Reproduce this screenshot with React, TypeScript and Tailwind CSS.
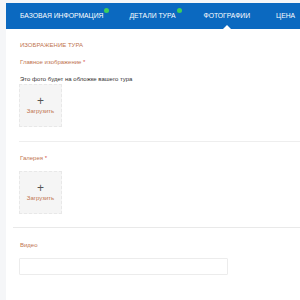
import React from 'react'

const Dot = () => (
    <span className="absolute -right-[6px] -top-[3px] w-[5px] h-[5px] rounded-full bg-[#3ecf5a]" />
)

const UploadBox = () => (
    <div className="ml-[6px] w-[43px] h-[43px] bg-[#f5f5f5] border border-dashed border-[#e8e8e8] flex flex-col items-center justify-center">
        <span className="text-[#555] text-[12px] leading-[11px] font-light">+</span>
        <span className="text-[#c0744f] text-[6px] leading-[9px]">Загрузить</span>
    </div>
)

const App = () => {
    return (
        <div className="w-[300px] h-[300px] flex bg-[#f5f6f8] overflow-hidden" style={{ fontFamily: '"Liberation Sans", Arial, sans-serif' }}>
            <div className="w-[6px] shrink-0" />
            <div className="flex-1 flex flex-col bg-white">
                <div className="h-[3px] bg-[#f5f6f8] shrink-0" />
                <div className="h-[26px] bg-[#0b69c0] flex items-center pl-[14px] text-white text-[6.8px] whitespace-nowrap shrink-0">
                    <span className="relative">БАЗОВАЯ ИНФОРМАЦИЯ<Dot /></span>
                    <span className="relative ml-[26px]">ДЕТАЛИ ТУРА<Dot /></span>
                    <span className="relative ml-[28px] h-full flex items-center">
                        ФОТОГРАФИИ
                        <span className="absolute bottom-0 left-1/2 -translate-x-1/2 w-0 h-0 border-l-[4px] border-r-[4px] border-b-[4px] border-l-transparent border-r-transparent border-b-white" />
                    </span>
                    <span className="ml-[26px]">ЦЕНА</span>
                </div>
                <div className="flex flex-col pl-[7px] text-[6px] leading-[8px]">
                    <div className="pl-[7px] pt-[12px] text-[#c0744f] uppercase">Изображение тура</div>
                    <div className="pl-[7px] pt-[9px] text-[#c0744f]">Главное изображение <span className="text-[#d9534f]">*</span></div>
                    <div className="pl-[7px] pt-[9px] text-[#333]">Это фото будет на обложке вашего тура</div>
                    <div className="pt-[1px]">
                        <UploadBox />
                    </div>
                    <div className="ml-[6px] mt-[14px] h-px bg-[#eeeeee]" />
                    <div className="pl-[7px] pt-[12px] text-[#c0744f]">Галерея <span className="text-[#d9534f]">*</span></div>
                    <div className="pt-[9px]">
                        <UploadBox />
                    </div>
                    <div className="mt-[13px] h-px bg-[#e9e9e9]" />
                    <div className="pl-[7px] pt-[13px] text-[#c0744f]">Видео</div>
                    <div className="pl-[6px] pt-[9px]">
                        <div className="w-[209px] h-[17px] border border-[#ececec] rounded-[1px] bg-white" />
                    </div>
                </div>
            </div>
        </div>
    )
}

export default App
